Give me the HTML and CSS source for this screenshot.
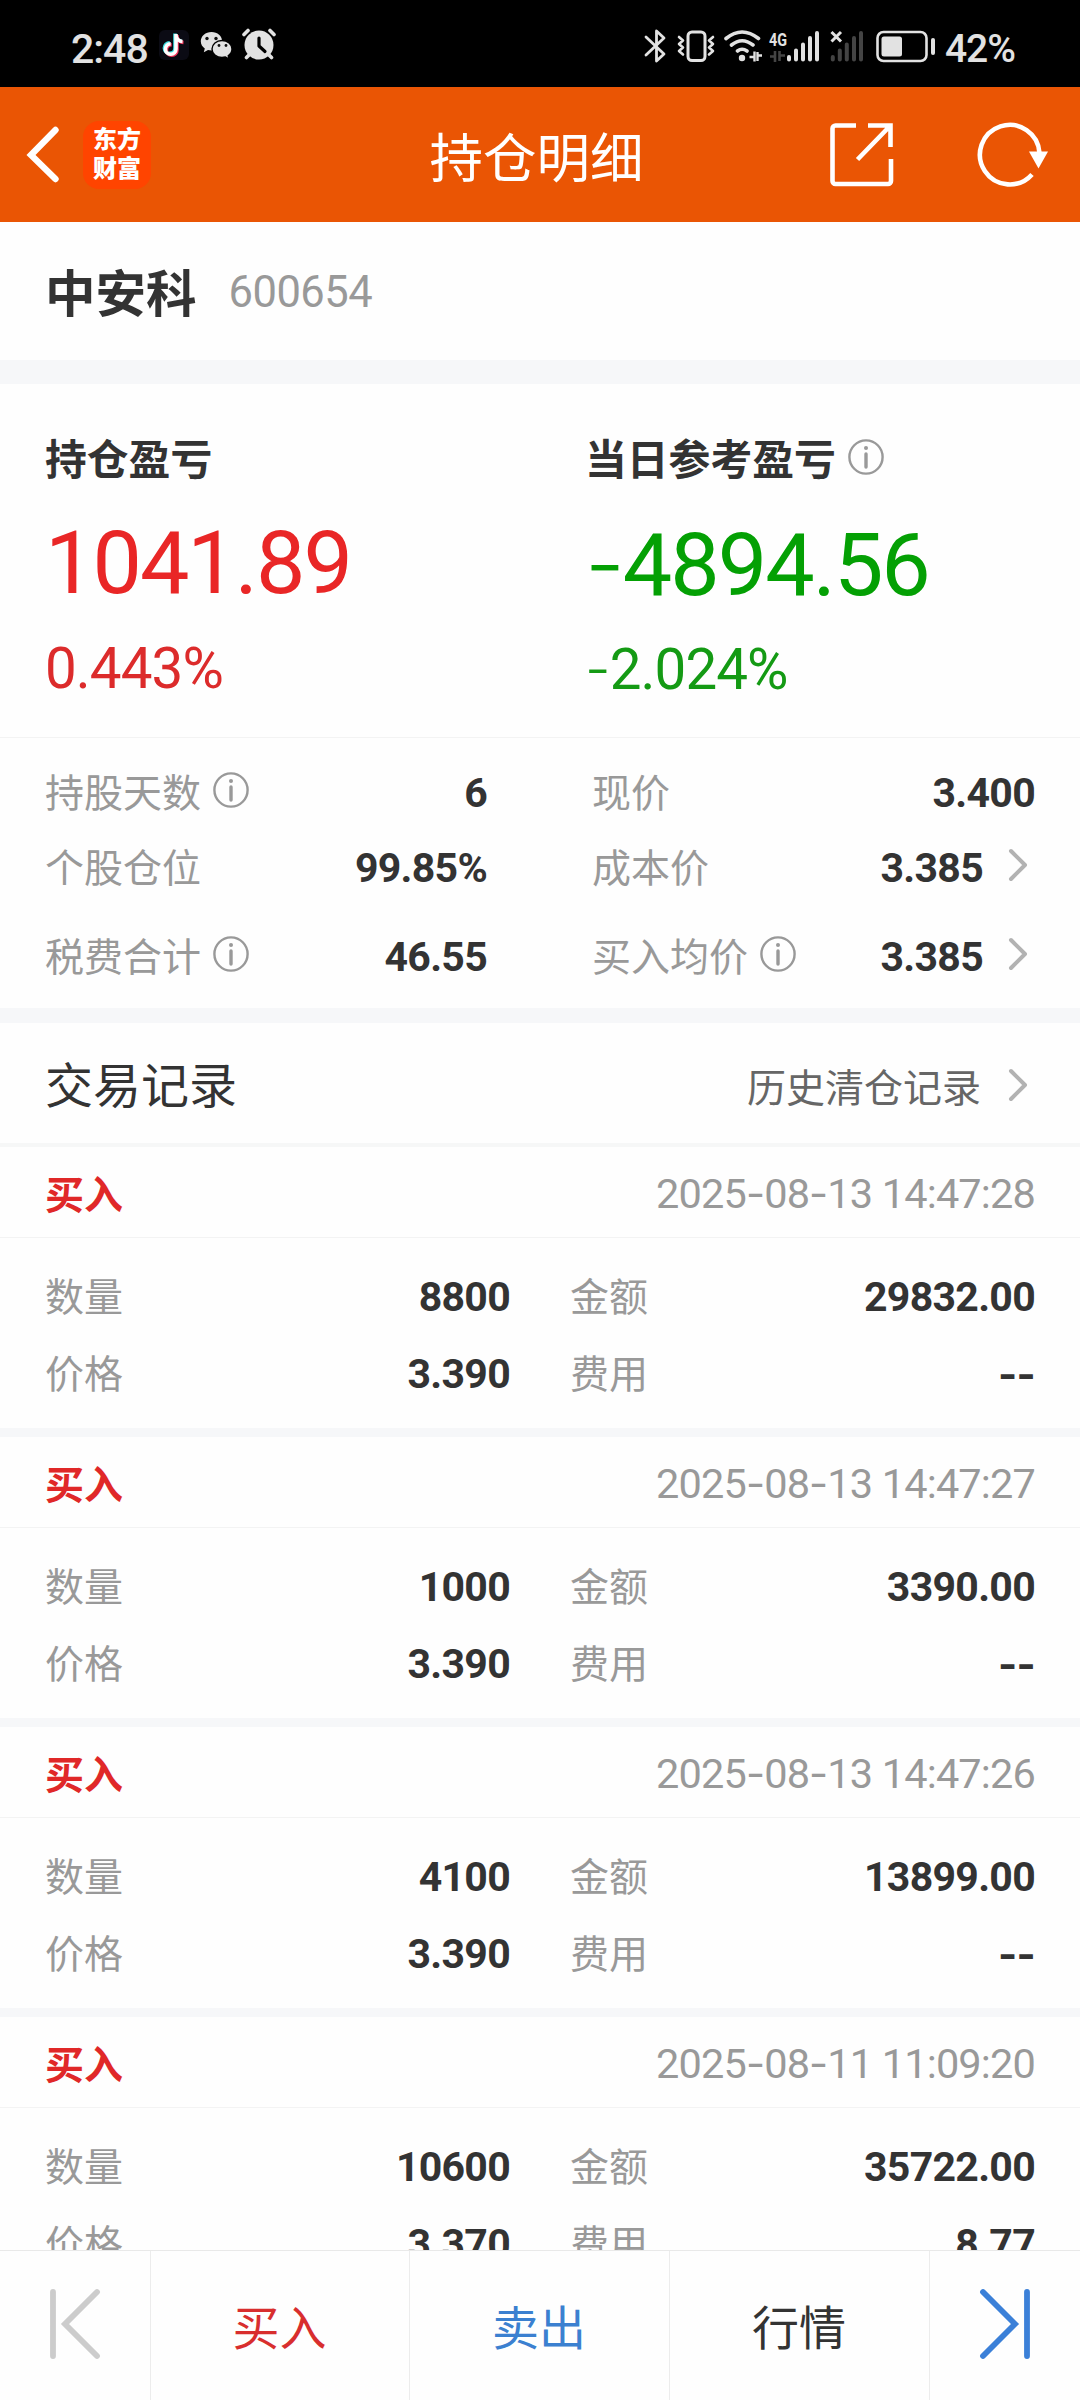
FILE: index.html
```html
<!DOCTYPE html>
<html lang="zh-CN">
<head>
<meta charset="utf-8">
<title>持仓明细</title>
<link rel="stylesheet" href="styles.css">
</head>
<body>
<svg width="0" height="0" class="defs" aria-hidden="true">
  <symbol id="info" viewBox="0 0 36 36">
    <circle cx="18" cy="18" r="16.6" fill="none" stroke="currentColor" stroke-width="2.4"/>
    <circle cx="18" cy="9" r="2" fill="currentColor"/>
    <path d="M18 15V28" stroke="currentColor" stroke-width="3.4" stroke-linecap="round"/>
  </symbol>
  <symbol id="chevron" viewBox="0 0 20 34">
    <path d="M3 3 17 17 3 31" fill="none" stroke="currentColor" stroke-width="4" stroke-linecap="round" stroke-linejoin="round"/>
  </symbol>
</svg>
<div class="screen">
  <div class="status">
    <span class="clock">2:48</span>
    <svg class="status-left" viewBox="154 26 126 40" width="126" height="40">
      <rect x="159" y="32" width="30" height="30" rx="6" fill="#0b0b14"/>
      <g fill="none" stroke-width="3.6">
        <path d="M175 35.5V50a5.3 5.3 0 1 1-5.3-5.3M175 37a7 7 0 0 0 6.500 6" stroke="#3fe0e4"/>
        <path d="M177 37V52a5.300 5.300 0 1 1-5.300-5.300M177 38.500a7 7 0 0 0 6.500 6" stroke="#f0355a"/>
        <path d="M176 36V51a5.300 5.300 0 1 1-5.300-5.300M176 37.500a7 7 0 0 0 6.500 6" stroke="#fff"/>
      </g>
      <path d="M211.500 34c-6 0-10.700 4.100-10.700 9.300 0 3 1.600 5.600 4 7.300l-1 3.600 4.200-2.200c1.100.3 2.300.5 3.500.5 6 0 10.700-4.100 10.700-9.200s-4.700-9.300-10.700-9.300z" fill="#e2e2e2"/>
      <path d="M222 42.500c-5.600 0-10 3.800-10 8.500s4.400 8.500 10 8.500c1.200 0 2.300-.2 3.400-.5l3.800 2-1-3.300c2.300-1.600 3.800-4 3.800-6.700 0-4.700-4.400-8.500-10-8.500z" fill="#e2e2e2" stroke="#000" stroke-width="1.400"/>
      <g fill="#111"><circle cx="207" cy="40.500" r="1.700"/><circle cx="216" cy="40.500" r="1.700"/><circle cx="219" cy="47.500" r="1.400"/><circle cx="226" cy="47.500" r="1.400"/></g>
      <circle cx="259" cy="47" r="14.500" fill="#e2e2e2"/>
      <path d="M244 36.500l4-4M274 36.500l-4-4M250 56l-3.500 3.500M268 56l3.500 3.500" stroke="#e2e2e2" stroke-width="3.600" stroke-linecap="round"/>
      <path d="M259 40v8l6 5.500" fill="none" stroke="#000" stroke-width="3.200" stroke-linecap="round" stroke-linejoin="round"/>
    </svg>
    <svg class="status-right" viewBox="640 24 300 44" width="300" height="44">
      <g fill="none" stroke="#e2e2e2" stroke-width="3" stroke-linecap="round" stroke-linejoin="round">
        <path d="M646 37 664 54 656.500 61V31L664 38 646 55" stroke-width="2.800"/>
        <rect x="688" y="32" width="17" height="28.500" rx="4"/>
        <path d="M679 37l4 3.500-4 3.500 4 3.500-4 3.500 4 3.500M713 37l-4 3.500 4 3.500-4 3.500 4 3.500-4 3.500" stroke-width="2.600"/>
        <path d="M726 38.500q16-13 32.500 0M731.500 45q10.500-8.500 21.500 0M737.500 51q4.500-3.500 9.500 0" stroke-width="3.600"/>
      </g>
      <circle cx="742" cy="58" r="3.200" fill="#e2e2e2"/>
      <path d="M754.500 51.500v10M749.500 57h5M757.500 61v-9M762 55.500h-4.500" stroke="#e2e2e2" stroke-width="2.400"/>
      <text x="769" y="45.500" class="net" textLength="18" lengthAdjust="spacingAndGlyphs">4G</text>
      <path d="M775 51v11M770 56.500h5M779.500 61v-10M785 55.500h-5" stroke="#444" stroke-width="2.600"/>
      <g stroke="#e2e2e2" stroke-width="4" stroke-linecap="round">
        <path d="M789 57v2.500M796 50.500v9M803 44.500v15M810 38v21.500M817 33v26.500"/>
      </g>
      <path d="M831.500 32l9.500 9.500M841 32l-9.500 9.500" stroke="#e2e2e2" stroke-width="3"/>
      <g stroke="#444" stroke-width="4" stroke-linecap="round">
        <path d="M832.800 57v2.500M839.800 50.500v9M846.800 44.500v15M854 38v21.500M861 33v26.500"/>
      </g>
      <rect x="877.500" y="32" width="49" height="29" rx="6" fill="none" stroke="#e2e2e2" stroke-width="2.600"/>
      <rect x="881.500" y="36.500" width="20.500" height="20" rx="2.500" fill="#e2e2e2"/>
      <rect x="931" y="38" width="4" height="17" rx="2" fill="#e2e2e2"/>
    </svg>
    <span class="battery">42%</span>
  </div>

  <header class="bar">
    <div class="bar-left">
      <svg width="34" height="58" viewBox="0 0 34 58"><path d="M29.500 4 5 29 29.500 53" fill="none" stroke="#fff" stroke-width="6.400" stroke-linecap="round" stroke-linejoin="miter"/></svg>
      <div class="logo"><span>东方</span><span>财富</span></div>
    </div>
    <h1>持仓明细</h1>
    <div class="bar-right">
      <svg width="64" height="64" viewBox="0 0 64 64" fill="none" stroke="#fff" stroke-width="4.600"><path d="M26 2.500H5.500a3 3 0 0 0-3 3V58a3 3 0 0 0 3 3H58a3 3 0 0 0 3-3V36M38 2.500H60.500V24M60 3 27.500 36.500"/></svg>
      <svg width="72" height="66" viewBox="0 0 72 66"><path d="M55 52.500A29.800 29.800 0 1 1 62.500 31" fill="none" stroke="#fff" stroke-width="4.600"/><path d="M52 29.500H71L61.500 46.500z" fill="#fff"/></svg>
    </div>
  </header>

  <section class="stock"><strong>中安科</strong><span class="code">600654</span></section>

  <section class="profit">
    <div>
      <h2>持仓盈亏</h2>
      <p class="amount up">1041.89</p>
      <p class="rate up">0.443%</p>
    </div>
    <div>
      <h2>当日参考盈亏<svg class="info"><use href="#info"/></svg></h2>
      <p class="amount down"><i>-</i>4894.56</p>
      <p class="rate down"><i>-</i>2.024%</p>
    </div>
  </section>

  <section class="facts">
    <div class="fact"><span>持股天数</span><svg class="info"><use href="#info"/></svg><b>6</b></div>
    <div class="fact"><span>现价</span><b>3.400</b></div>
    <div class="fact"><span>个股仓位</span><b>99.85%</b></div>
    <div class="fact"><span>成本价</span><b>3.385</b><svg class="chev"><use href="#chevron"/></svg></div>
    <div class="fact"><span>税费合计</span><svg class="info"><use href="#info"/></svg><b>46.55</b></div>
    <div class="fact"><span>买入均价</span><svg class="info"><use href="#info"/></svg><b>3.385</b><svg class="chev"><use href="#chevron"/></svg></div>
  </section>

  <section class="history">
    <h3>交易记录</h3><span class="link">历史清仓记录</span><svg class="chev"><use href="#chevron"/></svg>
  </section>

  <main class="records">
    <article>
      <div class="head"><strong>买入</strong><time>2025<i>-</i>08<i>-</i>13 14:47:28</time></div>
      <div class="body">
        <div><span>数量</span><b>8800</b></div><div><span>金额</span><b>29832.00</b></div>
        <div><span>价格</span><b>3.390</b></div><div><span>费用</span><b><i>--</i></b></div>
      </div>
    </article>
    <article>
      <div class="head"><strong>买入</strong><time>2025<i>-</i>08<i>-</i>13 14:47:27</time></div>
      <div class="body">
        <div><span>数量</span><b>1000</b></div><div><span>金额</span><b>3390.00</b></div>
        <div><span>价格</span><b>3.390</b></div><div><span>费用</span><b><i>--</i></b></div>
      </div>
    </article>
    <article>
      <div class="head"><strong>买入</strong><time>2025<i>-</i>08<i>-</i>13 14:47:26</time></div>
      <div class="body">
        <div><span>数量</span><b>4100</b></div><div><span>金额</span><b>13899.00</b></div>
        <div><span>价格</span><b>3.390</b></div><div><span>费用</span><b><i>--</i></b></div>
      </div>
    </article>
    <article>
      <div class="head"><strong>买入</strong><time>2025<i>-</i>08<i>-</i>11 11:09:20</time></div>
      <div class="body">
        <div><span>数量</span><b>10600</b></div><div><span>金额</span><b>35722.00</b></div>
        <div><span>价格</span><b>3.370</b></div><div><span>费用</span><b>8.77</b></div>
      </div>
    </article>
  </main>

  <nav class="tabs">
    <a class="prev"><svg width="54" height="74" viewBox="0 0 54 74"><path d="M5 5V69M49 5 17 37 49 69" fill="none" stroke="#ccc" stroke-width="5.800" stroke-linecap="round"/></svg></a>
    <a class="buy">买入</a>
    <a class="sell">卖出</a>
    <a class="quote">行情</a>
    <a class="next"><svg width="54" height="74" viewBox="0 0 54 74"><path d="M49 5V69M5 5 37 37 5 69" fill="none" stroke="#3b80d8" stroke-width="5.800" stroke-linecap="round"/></svg></a>
  </nav>
</div>
</body>
</html>
```
FILE: styles.css
```css
* { box-sizing: border-box; margin: 0; padding: 0; }

body {
  width: 1080px;
  height: 2400px;
  overflow: hidden;
  background: #fff;
  color: #333;
  font-family: "Noto Sans CJK SC", sans-serif;
}

svg { display: block; flex: none; }
.defs { position: absolute; }
i { font-family: Inter, sans-serif; font-style: normal; }

.screen {
  width: 1080px;
  height: 2400px;
  display: flex;
  flex-direction: column;
  background: #fefefe;
}

/* status bar */
.status {
  flex: none;
  height: 87px;
  padding: 10px 65px 0 71px;
  display: flex;
  align-items: center;
  background: #000;
  color: #e2e2e2;
  font-family: Roboto, sans-serif;
  font-weight: 500;
}
.clock { width: 83px; font-size: 41px; letter-spacing: -1px; }
.status-left { margin-top: -9px; }
.status-right { margin: -5px 5px 0 auto; }
.battery { font-size: 39px; letter-spacing: -1px; }
.net { font: 700 19px Roboto, sans-serif; fill: #e2e2e2; }

/* title bar */
.bar {
  flex: none;
  height: 135px;
  padding: 0 31px 0 26px;
  display: grid;
  grid-template-columns: 1fr auto 1fr;
  align-items: center;
  background: #ea5504;
  color: #fff;
}
.bar-left { display: flex; align-items: center; gap: 23px; }
.bar-right { display: flex; align-items: center; justify-content: flex-end; gap: 83px; }
.bar h1 { width: 216px; font-size: 53.500px; font-weight: 400; line-height: 78px; }
.logo {
  width: 68px;
  height: 68px;
  border-radius: 16px;
  display: flex;
  flex-direction: column;
  align-items: center;
  justify-content: center;
  background: #ff4400;
  font-size: 24px;
  font-weight: 900;
  line-height: 29px;
  padding-bottom: 5px;
}

/* stock name */
.stock {
  flex: none;
  height: 138px;
  padding-left: 45px;
  display: flex;
  align-items: center;
}
.stock strong { margin-top: -2px; font-size: 50.500px; line-height: 72px; }
.code {
  margin: 3px 0 0 32px;
  font: 43.500px Roboto, sans-serif;
  letter-spacing: -0.5px;
  color: #999;
}

/* profit and loss */
.profit {
  flex: none;
  height: 378px;
  padding: 41px 0 0 45px;
  display: grid;
  grid-template-columns: 540px 1fr;
  border-top: 24px solid #f6f7f9;
  border-bottom: 1px solid #f3f3f3;
}
.profit h2 {
  height: 64px;
  display: flex;
  align-items: center;
  font-size: 41.800px;
  line-height: 60px;
}
.profit h2 .info { margin: -1px 0 0 12px; }
.amount, .rate { font-family: Roboto, sans-serif; font-weight: 400; white-space: nowrap; }
.amount { height: 100px; margin-top: 24px; font-size: 88px; line-height: 100px; letter-spacing: -2px; }
.rate { height: 70px; margin-top: 21px; font-size: 56.500px; line-height: 70px; letter-spacing: -0.9px; }
.up { color: #e92626; }
.rate.up { color: #dc2b2b; }
.down { color: #04a004; }
.rate.down { color: #149a14; }
.down i { font-weight: 300; }

.info { width: 36px; height: 36px; margin: -4px 0 0 12px; color: #999; }
.chev { width: 20px; height: 34px; margin: -4px 7px 0 25px; color: #b2b2b2; }

/* position facts */
.facts {
  flex: none;
  height: 270px;
  padding: 16px 45px 0;
  display: grid;
  grid-template-columns: 442px 443px;
  grid-template-rows: 75px 75px 104px;
  column-gap: 105px;
}
.fact { display: flex; align-items: center; font-size: 39px; line-height: 56px; }
.fact span { margin-top: -4px; color: #999; }
b {
  margin: 2px 0 0 auto;
  font-family: Roboto, sans-serif;
  font-size: 41px;
  font-weight: 700;
  letter-spacing: -0.7px;
}

/* trade history heading */
.history {
  flex: none;
  height: 139px;
  padding: 0 45px;
  display: flex;
  align-items: center;
  border-top: 15px solid #f6f7f9;
  border-bottom: 4px solid #f6f7f7;
}
.history h3 { font-size: 48px; font-weight: 400; line-height: 68px; margin-top: -2px; }
.history .link { margin: 4px 2px 0 auto; font-size: 39px; line-height: 56px; color: #666; }
.history .chev { margin-top: 3px; }

/* trade records */
.records { flex: 1; min-height: 0; overflow: hidden; }
article { height: 290px; border-bottom: 9px solid #f6f7f9; }
.head {
  height: 91px;
  padding: 0 45px;
  display: flex;
  align-items: center;
  justify-content: space-between;
  border-bottom: 1px solid #f3f3f3;
}
.head strong { margin-top: -1px; font-size: 39px; line-height: 56px; color: #e02828; }
time { margin-top: 2px; font: 41.500px Roboto, sans-serif; letter-spacing: -0.85px; color: #999; }
.body {
  padding: 20px 45px 0;
  display: grid;
  grid-template-columns: 465px 465px;
  grid-auto-rows: 77px;
  column-gap: 60px;
}
.body div { display: flex; align-items: center; font-size: 39px; line-height: 56px; }
.body span { margin-top: -5px; color: #999; }
.body b { margin-top: 1px; }

/* bottom actions */
.tabs {
  flex: none;
  height: 150px;
  display: grid;
  grid-template-columns: 150px 259px 260px 260px 151px;
  border-top: 1px solid #e9e9e9;
}
.tabs a {
  display: flex;
  align-items: center;
  justify-content: center;
  padding-right: 1px;
  font-size: 47px;
  line-height: 66px;
  padding-bottom: 2px;
}
.tabs a + a { border-left: 1px solid #ececec; }
.tabs svg { margin-top: -1px; }
.buy { color: #d82e2e; }
.sell { color: #3b80d0; }
```
